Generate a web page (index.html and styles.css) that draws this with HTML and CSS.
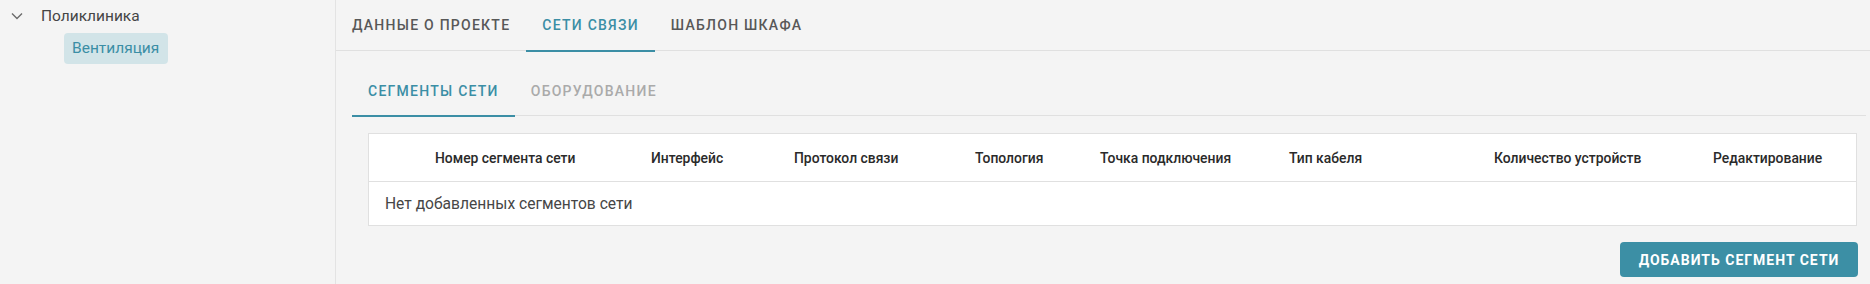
FILE: index.html
```html
<!DOCTYPE html>
<html lang="ru">
<head>
<meta charset="utf-8">
<link rel="stylesheet" href="styles.css">
</head>
<body>
<div class="app">
  <aside class="sidebar">
    <div class="tree-node">
      <svg class="chevron" width="12" height="8" viewBox="0 0 12 8"><path d="M1 1.5 L6 6.5 L11 1.5" fill="none" stroke="#6b6b6b" stroke-width="1.4"/></svg>
      <span class="node-label">Поликлиника</span>
    </div>
    <div class="tree-child">
      <span class="chip">Вентиляция</span>
    </div>
  </aside>
  <main class="main">
    <nav class="tabs">
      <div class="tab">Данные о проекте</div>
      <div class="tab active">Сети связи</div>
      <div class="tab">Шаблон шкафа</div>
    </nav>
    <section class="content">
      <nav class="subtabs">
        <div class="subtab active">Сегменты сети</div>
        <div class="subtab disabled">Оборудование</div>
      </nav>
      <div class="panel">
        <div class="table">
          <div class="thead">
            <div class="th">Номер сегмента сети</div>
            <div class="th">Интерфейс</div>
            <div class="th">Протокол связи</div>
            <div class="th">Топология</div>
            <div class="th">Точка подключения</div>
            <div class="th">Тип кабеля</div>
            <div class="th">Количество устройств</div>
            <div class="th">Редактирование</div>
          </div>
          <div class="empty">Нет добавленных сегментов сети</div>
        </div>
        <div class="actions">
          <button class="btn">Добавить сегмент сети</button>
        </div>
      </div>
    </section>
  </main>
</div>
</body>
</html>
```
FILE: styles.css
```css
* { box-sizing: border-box; }
html, body {
  margin: 0;
  padding: 0;
  background: #f4f4f4;
  font-family: Roboto, "Noto Sans", "Liberation Sans", sans-serif;
}
.app {
  display: flex;
  height: 284px;
}
.sidebar {
  width: 336px;
  flex: none;
  border-right: 1px solid #e3e3e3;
  padding-top: 4px;
}
.tree-node {
  display: flex;
  align-items: center;
  height: 24px;
  padding-left: 11px;
}
.chevron { display: block; }
.node-label {
  margin-left: 18px;
  font-size: 15.5px;
  color: #454545;
}
.tree-child {
  padding-left: 64px;
  padding-top: 5px;
}
.chip {
  display: inline-block;
  height: 31px;
  line-height: 31px;
  padding: 0 9px 0 8px;
  border-radius: 4px;
  background: #d2e4e8;
  color: #3b8ea5;
  font-size: 15.5px;
}
.main {
  flex: 1;
  min-width: 0;
}
.tabs {
  display: flex;
  height: 51px;
  border-bottom: 1px solid #e0e0e0;
}
.tab, .subtab {
  position: relative;
  padding: 0 16px;
  display: flex;
  align-items: center;
  font-size: 14px;
  font-weight: 500;
  letter-spacing: 1.25px;
  text-transform: uppercase;
  color: #585858;
}
.tab { height: 50px; }
.tab.active, .subtab.active { color: #3b8ea5; }
.tab.active::after, .subtab.active::after {
  content: "";
  position: absolute;
  left: 0;
  right: 0;
  bottom: -2px;
  height: 2px;
  background: #3b8ea5;
}
.content {
  padding: 16px 4px 0 16px;
}
.subtabs {
  display: flex;
  height: 49px;
  border-bottom: 1px solid #e0e0e0;
}
.subtab { height: 48px; }
.subtab.disabled { color: #aaaaaa; }
.panel {
  padding: 17px 9px 0 16px;
}
.table {
  background: #fff;
  border: 1px solid #e0e0e0;
}
.thead {
  display: grid;
  grid-template-columns: 216px 143px 181px 125px 189px 205px 219px 1fr;
  height: 48px;
  align-items: center;
  padding-left: 66px;
  border-bottom: 1px solid #e0e0e0;
}
.th {
  font-size: 13.9px;
  font-weight: 500;
  color: #2a2a2a;
  white-space: nowrap;
}
.empty {
  height: 43px;
  display: flex;
  align-items: center;
  padding-left: 16px;
  font-size: 15.6px;
  color: #464646;
}
.actions {
  display: flex;
  justify-content: flex-end;
  padding-top: 16px;
}
.btn {
  height: 35px;
  width: 238px;
  border: none;
  border-radius: 4px;
  background: #3c8fa5;
  color: #fff;
  font-family: Roboto, "Noto Sans", "Liberation Sans", sans-serif;
  font-size: 14px;
  font-weight: 700;
  letter-spacing: 1px;
  text-transform: uppercase;
  padding: 0 16px;
  margin-right: -1px;
}
```
